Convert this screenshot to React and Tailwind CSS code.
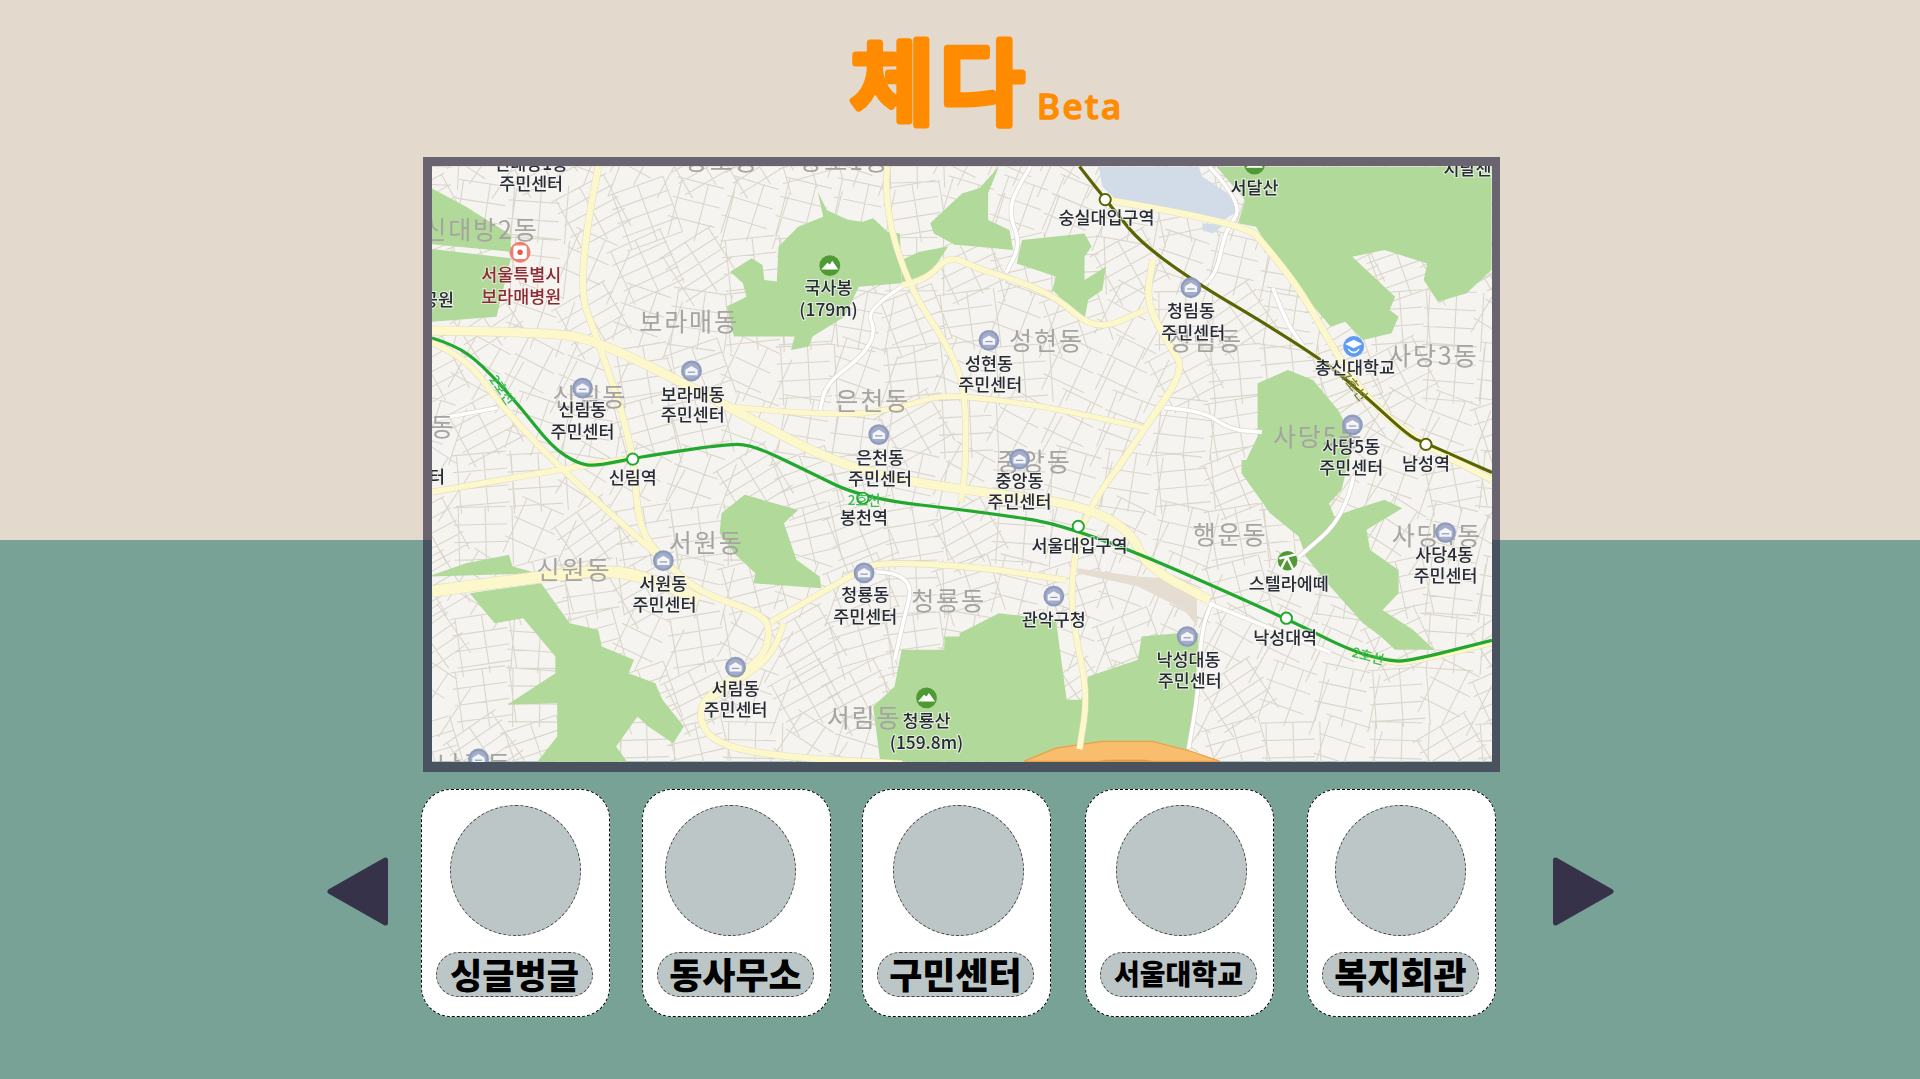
const fromZoom = (ox, oy, pts) =>
  pts.map(([x, y]) => `${((ox + x / 2.8) / 1.2245).toFixed(1)},${((oy + y / 3) / 1.2245).toFixed(1)}`).join(' ');

// rounds the corners of a polyline through the midpoints of its segments
const smooth = (pts) => {
  let d = `M${pts[0][0]} ${pts[0][1]}`;
  for (let i = 1; i < pts.length - 1; i++) {
    const mx = (pts[i][0] + pts[i + 1][0]) / 2;
    const my = (pts[i][1] + pts[i + 1][1]) / 2;
    d += `Q${pts[i][0]} ${pts[i][1]} ${mx} ${my}`;
  }
  const last = pts[pts.length - 1];
  return `${d}L${last[0]} ${last[1]}`;
};

// green areas, read off the zoomed crops
const parks = [
  fromZoom(420, 150, [[34, 115], [130, 170], [255, 255], [255, 305], [34, 283]]),
  fromZoom(420, 150, [[34, 297], [255, 325], [215, 500], [34, 515]]),
  fromZoom(420, 150, [[1115, 125], [1140, 180], [1200, 210], [1240, 215], [1270, 205], [1310, 245], [1345, 250], [1350, 400], [1230, 410], [1190, 500], [1100, 560], [1090, 590], [1040, 600], [1050, 560], [880, 560], [860, 470], [915, 440], [905, 400], [870, 365], [930, 325], [960, 345], [965, 390], [1000, 395], [1005, 290], [1060, 230], [1130, 200]]),
  fromZoom(420, 150, [[1430, 220], [1520, 130], [1568, 115], [1568, 285], [1500, 285], [1465, 265], [1440, 250]]),
  fromZoom(420, 150, [[1350, 330], [1400, 305], [1480, 290], [1430, 370], [1350, 400]]),
  fromZoom(960, 150, [[110, 50], [80, 130], [80, 210], [140, 240], [150, 300], [0, 285], [0, 180]]),
  fromZoom(960, 150, [[175, 270], [350, 250], [370, 290], [350, 320], [350, 390], [410, 350], [400, 420], [360, 450], [350, 510], [260, 420], [270, 380], [160, 340]]),
  fromZoom(960, 150, [[720, 50], [800, 150], [780, 220], [830, 230], [900, 350], [960, 430], [1040, 530], [1080, 515], [1130, 570], [1210, 550], [1230, 500], [1205, 480], [1220, 440], [1130, 350], [1100, 320], [1190, 300], [1310, 340], [1300, 390], [1340, 455], [1420, 430], [1490, 360], [1490, 50]]),
  fromZoom(960, 150, [[835, 700], [920, 660], [990, 690], [1060, 780], [1100, 860], [1090, 960], [790, 960], [835, 860]]),
  fromZoom(960, 460, [[790, 0], [1090, 0], [1070, 90], [1035, 130], [1050, 170], [1100, 150], [1190, 120], [1240, 145], [1140, 210], [1150, 270], [1230, 330], [1230, 400], [1185, 450], [1270, 510], [1330, 570], [1220, 570], [1180, 530], [1130, 490], [1030, 370], [970, 290], [950, 230], [870, 160], [790, 40]]),
  fromZoom(960, 460, [[0, 520], [110, 460], [270, 480], [300, 720], [340, 720], [360, 650], [500, 600], [510, 530], [610, 520], [670, 520], [660, 700], [640, 905], [0, 905]]),
  fromZoom(420, 460, [[1568, 530], [1470, 530], [1470, 570], [1350, 570], [1330, 680], [1270, 740], [1290, 905], [1568, 905]]),
  fromZoom(420, 460, [[910, 105], [1060, 150], [1020, 190], [1055, 300], [1120, 350], [1125, 385], [935, 370], [940, 340], [900, 300], [880, 280], [840, 220], [845, 160]]),
  fromZoom(420, 460, [[35, 345], [130, 310], [250, 285], [260, 320], [330, 340], [35, 350]]),
  fromZoom(420, 460, [[140, 400], [340, 370], [380, 430], [420, 490], [500, 510], [510, 560], [600, 600], [585, 640], [660, 670], [680, 720], [740, 800], [710, 850], [640, 800], [610, 770], [550, 860], [580, 905], [330, 905], [385, 830], [385, 730], [245, 735], [380, 640], [380, 590], [290, 475], [210, 490]]),
];

const yellowRoads = [
  { w: 7, pts: [[353, 270], [451, 271], [489, 279], [553, 310], [594, 332], [693, 384], [784, 400], [880, 411], [924, 433], [936, 463], [988, 490]] },
  { w: 5, pts: [[489, 136], [470, 229], [489, 279], [518, 367], [521, 430], [541, 457], [571, 484], [620, 500], [630, 514], [623, 539], [585, 561], [569, 582], [582, 607], [634, 618], [737, 624]] },
  { w: 4.5, pts: [[353, 402], [454, 384], [518, 374]] },
  { w: 4.5, pts: [[353, 280], [380, 291], [410, 332], [456, 381], [541, 457]] },
  { w: 9, pts: [[353, 483], [442, 471], [497, 465], [536, 474], [571, 490]] },
  { w: 4.5, pts: [[630, 508], [699, 468], [716, 459], [800, 463], [871, 474]] },
  { w: 4.5, pts: [[640, 509], [634, 533], [605, 555], [579, 572]] },
  { w: 4.5, pts: [[918, 376], [886, 416], [875, 471], [877, 512], [889, 566], [882, 612]] },
  { w: 5, pts: [[912, 384], [936, 349], [968, 302], [956, 283], [936, 247], [942, 212]] },
  { w: 5, pts: [[903, 163], [1017, 182], [1035, 202], [1064, 239], [1093, 291], [1116, 324], [1152, 357], [1219, 392]] },
  { w: 4.5, pts: [[737, 233], [757, 229], [775, 208], [800, 220], [822, 226], [863, 242], [895, 271], [936, 253]] },
  { w: 4.5, pts: [[725, 136], [722, 166], [742, 234], [775, 283], [789, 318], [789, 384], [785, 410]] },
  { w: 4, pts: [[594, 332], [687, 341], [740, 332], [766, 323], [800, 325], [854, 332], [933, 349]] },
  { w: 4.5, pts: [[1102, 531], [1134, 541], [1152, 541], [1219, 525]] },
];

const whiteRoads = [
  [[842, 136], [828, 158], [825, 177], [834, 199], [822, 223]],
  [[988, 136], [1017, 167], [1001, 188], [994, 223], [982, 234]],
  [[737, 234], [707, 253], [716, 270], [705, 291], [675, 313], [670, 335]],
  [[951, 333], [982, 335], [1005, 351], [1031, 353]],
  [[1106, 389], [1099, 422], [1061, 455]],
  [[991, 492], [982, 506], [979, 566], [971, 612]],
  [[988, 493], [1087, 533]],
  [[353, 343], [407, 333]],
  [[716, 467], [748, 468], [737, 512], [731, 539]],
  [[1040, 235], [1050, 262], [1065, 283]],
];

const line2 = [[353, 276], [372, 282], [393, 297], [425, 332], [451, 365], [471, 378], [486, 381], [518, 374], [591, 363], [614, 363], [658, 384], [705, 407], [800, 418], [880, 430], [1051, 505], [1102, 531], [1134, 540], [1152, 540], [1219, 523]];
const line7 = [[882, 136], [903, 163], [942, 210], [1075, 289], [1116, 324], [1152, 357], [1165, 362], [1219, 386]];

const stations = [
  [517, 375, '#22a82e'],
  [705, 407, '#22a82e'],
  [881, 430, '#22a82e'],
  [1051, 505, '#22a82e'],
  [903, 163, '#5a6400'],
  [1165, 363, '#5a6400'],
];

const offices = [[476, 317], [565, 303], [718, 355], [808, 278], [973, 235], [1105, 347], [833, 375], [1181, 435], [542, 458], [706, 468], [861, 487], [970, 520], [601, 545], [391, 620]];

const districts = [
  ['신대방2동', 393, 186], ['보라매동', 563, 261], ['은천동', 713, 326], ['성현동', 855, 277],
  ['청림동', 985, 277], ['사당3동', 1171, 289], ['사당5동', 1077, 355], ['신림동', 482, 323],
  ['중앙동', 845, 376], ['서원동', 577, 442], ['신원동', 469, 464], ['청룡동', 775, 489],
  ['행운동', 1005, 435], ['사당4동', 1174, 436], ['서림동', 706, 585], ['동', 362, 347],
  ['난곡동', 388, 623], ['상도동', 590, 130], ['상도1동', 690, 130],
];

const labels = [
  ['신대방1동', 434, 133], ['주민센터', 434, 149], ['서달산', 1025, 152], ['시달센', 1199, 137], ['숭실대입구역', 904, 177],
  ['국사봉', 677, 234], ['(179m)', 677, 252], ['청림동', 973, 253], ['주민센터', 975, 271], ['성현동', 808, 296],
  ['주민센터', 809, 313], ['총신대학교', 1107, 299], ['보라매동', 566, 321], ['주민센터', 566, 338], ['신림동', 476, 334],
  ['주민센터', 476, 352], ['사당5동', 1104, 364], ['주민센터', 1104, 381], ['남성역', 1165, 378], ['은천동', 719, 373],
  ['주민센터', 719, 390], ['신림역', 517, 389], ['중앙동', 833, 392], ['주민센터', 833, 409], ['봉천역', 706, 422],
  ['서울대입구역', 882, 445], ['사당4동', 1180, 452], ['주민센터', 1181, 469], ['스텔라에떼', 1053, 476], ['서원동', 542, 476],
  ['주민센터', 543, 493], ['청룡동', 707, 485], ['주민센터', 707, 503], ['관악구청', 861, 505], ['낙성대역', 1050, 520],
  ['낙성대동', 971, 538], ['주민센터', 972, 555], ['서림동', 601, 562], ['주민센터', 601, 579], ['청룡산', 757, 588],
  ['(159.8m)', 757, 606], ['공원', 358, 244], ['터', 357, 388],
];

// side streets: small rotated grids, the parks are painted over them
const buildStreets = () => {
  let d = '';
  for (let x = 353; x < 1240; x += 44) {
    for (let y = 130; y < 640; y += 44) {
      const h = Math.abs(Math.sin(x * 12.9898 + y * 78.233) * 43758.5453) % 1;
      const a = ((h * 70 - 35) * Math.PI) / 180;
      const c = Math.cos(a);
      const s = Math.sin(a);
      const put = (u, v) => `${(x + u * c - v * s).toFixed(1)} ${(y + u * s + v * c).toFixed(1)}`;
      const step = 10 + h * 9;
      for (let v = -24; v <= 24; v += step) d += `M${put(-26, v)}L${put(26 - h * 18, v)}`;
      for (let u = -22; u <= 22; u += 22) d += `M${put(u, -24)}L${put(u, 24)}`;
    }
  }
  return d;
};

const streets = buildStreets();

const cards = [
  { name: '싱글벙글', card: 'ml-[32px] w-[189px]', circle: 'ml-[28px]', text: 'text-[35px]' },
  { name: '동사무소', card: 'ml-[32px] w-[189px]', circle: 'ml-[22px]', text: 'text-[36px]' },
  { name: '구민센터', card: 'ml-[31px] w-[189px]', circle: 'ml-[30px]', text: 'text-[36px]' },
  { name: '서울대학교', card: 'ml-[34px] w-[189px]', circle: 'ml-[30px]', text: 'text-[28px]' },
  { name: '복지회관', card: 'ml-[33px] w-[189px]', circle: 'ml-[27px]', text: 'text-[36px]' },
];

function MapView() {
  return (
    <svg viewBox="353 136 866 486" className="block w-full h-full blur-[0.5px]" fontFamily="'Noto Sans CJK KR', sans-serif" textAnchor="middle">
      <rect x="353" y="136" width="866" height="486" fill="#f5f4f0" />
      <path d={streets} fill="none" stroke="#dbd6cc" strokeWidth="0.9" />
      {parks.map((pts, i) => <polygon key={i} points={pts} fill="#b1d99a" />)}
      <polygon points={fromZoom(960, 150, [[390, 50], [670, 50], [680, 80], [780, 150], [770, 190], [740, 210], [440, 150], [400, 110]])} fill="#d2dce8" />
      <polygon points={fromZoom(960, 150, [[680, 220], [740, 225], [710, 250], [680, 240]])} fill="#d2dce8" />
      <polygon points={fromZoom(960, 460, [[640, 360], [665, 420], [665, 500], [630, 450], [500, 380], [330, 340], [330, 325], [500, 350]])} fill="#e6ddd2" />
      <polygon points={fromZoom(960, 460, [[180, 905], [270, 865], [400, 845], [540, 845], [650, 875], [730, 905]])} fill="#f8bd6d" stroke="#eba04a" strokeWidth="1" />
      <polygon points={fromZoom(960, 460, [[385, 905], [410, 900], [520, 900], [550, 905]])} fill="#e09a45" />

      {whiteRoads.map((pts, i) => <path key={i} d={smooth(pts)} fill="none" stroke="#d8d3c9" strokeWidth="4" />)}
      {whiteRoads.map((pts, i) => <path key={i} d={smooth(pts)} fill="none" stroke="#ffffff" strokeWidth="3" />)}
      {yellowRoads.map((r, i) => <path key={i} d={smooth(r.pts)} fill="none" stroke="#e4dec0" strokeWidth={r.w + 1} />)}
      {yellowRoads.map((r, i) => <path key={i} d={smooth(r.pts)} fill="none" stroke="#fdf8cc" strokeWidth={r.w} />)}

      <path d={smooth(line7)} fill="none" stroke="#5a6400" strokeWidth="2.6" />
      <path d={smooth(line2)} fill="none" stroke="#22a82e" strokeWidth="2.6" />
      {stations.map(([x, y, c]) => <circle key={x} cx={x} cy={y} r="4.6" fill="#ffffff" stroke={c} strokeWidth="1.6" />)}

      <g fontSize="20.5" fill="#a5a4a1" letterSpacing="1.5" dominantBaseline="central">
        {districts.map(([t, x, y]) => <text key={t + x} x={x} y={y}>{t}</text>)}
      </g>

      {offices.map(([x, y]) => (
        <g key={x}>
          <circle cx={x} cy={y} r="8.5" fill="#8f9bbd" />
          <circle cx={x} cy={y} r="6.6" fill="#a3adca" />
          <path d={`M${x - 5} ${y - 1}L${x} ${y - 4}L${x + 5} ${y - 1}V${y + 3.5}H${x - 5}Z`} fill="#f4f5f8" />
          <path d={`M${x - 3} ${y + 1}H${x + 3}`} stroke="#8f9bbd" strokeWidth="1" />
        </g>
      ))}

      {/* university */}
      <circle cx="1106" cy="283" r="8.5" fill="#5d9cf2" />
      <path d="M1099 281L1106 277.500L1113 281L1106 284.500Z" fill="#ffffff" />
      <path d="M1101.500 284.500Q1106 290 1110.500 284.500V286Q1106 291 1101.500 286Z" fill="#ffffff" />
      {/* hospital */}
      <circle cx="425" cy="206" r="8.500" fill="#ee7f73" />
      <rect x="419.500" y="200.500" width="11" height="11" rx="2" fill="#ffffff" />
      <circle cx="425" cy="206" r="2.200" fill="#e8584d" />
      {/* mountains */}
      {[[678, 217], [757, 570], [1025, 134]].map(([x, y]) => (
        <g key={x}>
          <circle cx={x} cy={y} r="8.500" fill="#4f9a35" />
          <path d={`M${x - 7} ${y + 3}L${x - 2} ${y - 2.500}L${x} ${y - 1}L${x + 2} ${y - 4}L${x + 7} ${y + 3}Z`} fill="#ffffff" />
        </g>
      ))}
      {/* observatory */}
      <circle cx="1052" cy="458" r="8" fill="#4f9a35" />
      <path d="M1046 456L1058 453M1051 456L1047 464M1052 456L1056 464" stroke="#ffffff" strokeWidth="2" strokeLinecap="round" />

      <g fontSize="14.200" fontWeight="500" fill="#262b36" stroke="#f5f4f0" strokeWidth="1.800" strokeOpacity="0.75" paintOrder="stroke" dominantBaseline="central">
        {labels.map(([t, x, y]) => <text key={t + x + y} x={x} y={y}>{t}</text>)}
      </g>
      <g fontSize="14.200" fontWeight="500" fill="#8e2a33" stroke="#f5f4f0" strokeWidth="1.800" strokeOpacity="0.6" paintOrder="stroke" dominantBaseline="central">
        <text x="426" y="223">서울특별시</text>
        <text x="426" y="241">보라매병원</text>
      </g>
      <g fontSize="11" fontWeight="500" fill="#3dbb55" dominantBaseline="central">
        <text x="411" y="318" transform="rotate(55 411 318)">2호선</text>
        <text x="1118" y="535" transform="rotate(15 1118 535)">2호선</text>
        <text x="706" y="408">2호선</text>
      </g>
      <text x="1107" y="315" fontSize="11" fontWeight="500" fill="#7d8430" dominantBaseline="central" transform="rotate(50 1107 315)">7호선</text>
    </svg>
  );
}

function Logo() {
  return (
    <svg width="300" height="130" viewBox="0 0 300 130" className="block" fill="#ff8c00" stroke="#ff8c00" strokeLinejoin="round" strokeLinecap="round">
      <text x="7" y="97" fontSize="92" fontWeight="500" strokeWidth="7" letterSpacing="5" fontFamily="'Noto Sans CJK KR', sans-serif">체다</text>
      <text x="194" y="99" fontSize="35" fontWeight="500" strokeWidth="1.500" letterSpacing="2.500" fontFamily="'Noto Sans', sans-serif">Beta</text>
    </svg>
  );
}

function Arrow({ flip }) {
  return (
    <svg width="62" height="69" viewBox="0 0 62 69" className={flip ? 'shrink-0 mb-[23px] ml-[56px] rotate-180' : 'shrink-0 mb-[23px]'}>
      <path d="M3 34.500L58.500 3V66Z" fill="#353249" stroke="#353249" strokeWidth="5" strokeLinejoin="round" />
    </svg>
  );
}

function PlaceCard({ name, card, circle, text }) {
  return (
    <div className={`${card} h-[228px] shrink-0 rounded-[30px] border border-dashed border-black bg-white pt-[15px]`}>
      <div className={`${circle} w-[131px] h-[131px] rounded-full border border-dashed border-[#444] bg-[#bdc6c6]`} />
      <div className={`${text} ml-[14px] mt-[16px] w-[157px] h-[45px] pb-[3px] rounded-full border border-dashed border-[#444] bg-[#bdc6c6] flex items-center justify-center font-black text-black leading-none whitespace-nowrap`}>
        {name}
      </div>
    </div>
  );
}

export default function App() {
  return (
    <div className="w-[1920px] h-[1079px] overflow-hidden bg-[linear-gradient(#e3d9cc_540px,#78a295_540px)] [font-family:'Noto_Sans_CJK_KR',sans-serif]">
      {/* title */}
      <div className="h-[157px] pl-[843px] pt-[20px]">
        <Logo />
      </div>

      {/* map */}
      <div className="ml-[423px] w-[1077px] h-[615px] border-t-[9px] border-l-[9px] border-r-[8px] border-b-[10px] border-[#353249]/70">
        <MapView />
      </div>

      {/* places */}
      <div className="mt-[17px] ml-[327px] flex items-center">
        <Arrow />
        {cards.map((c) => <PlaceCard key={c.name} {...c} />)}
        <Arrow flip />
      </div>
    </div>
  );
}
